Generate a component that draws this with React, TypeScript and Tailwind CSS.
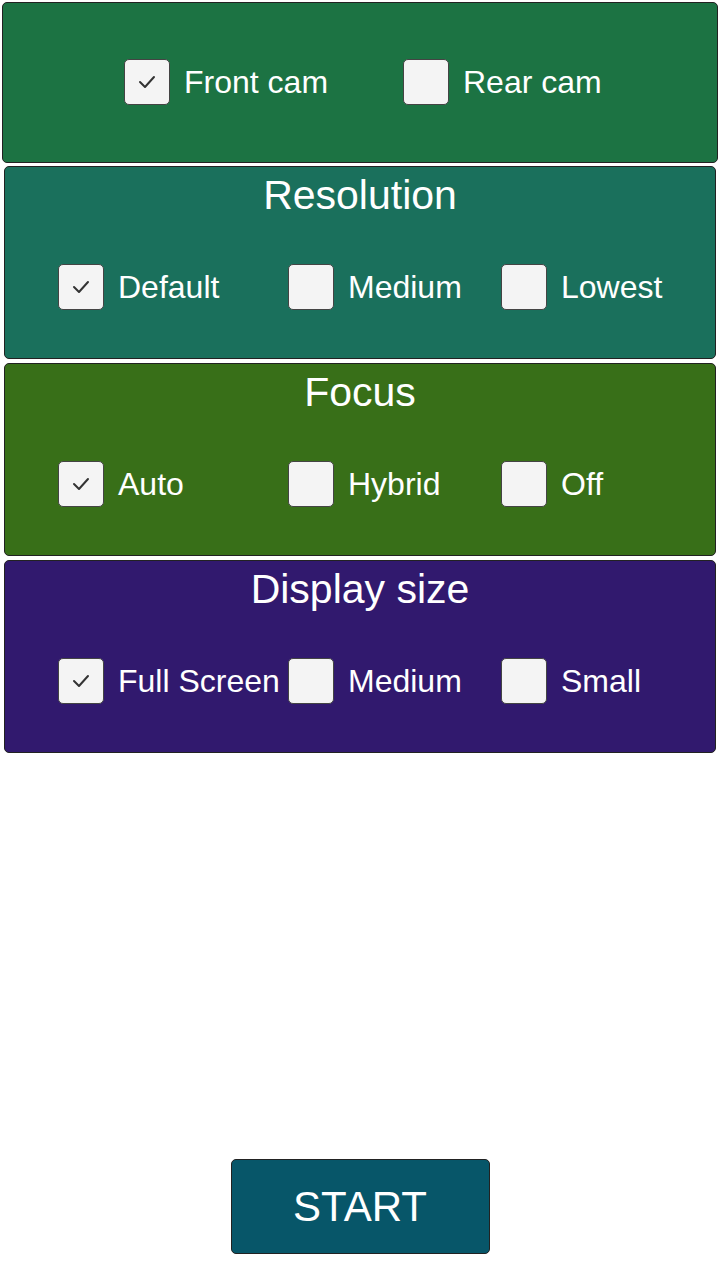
import React, { useState } from 'react';

function CheckBox({ checked }: { checked: boolean }) {
  return (
    <div className="w-[46px] h-[46px] rounded-[5px] bg-[#f4f4f4] border border-[#444] flex items-center justify-center flex-shrink-0">
      {checked && (
        <svg width="20" height="20" viewBox="0 0 20 20" fill="none">
          <polyline points="3,10 8,15 17,5" stroke="#333" strokeWidth="2" strokeLinecap="round" strokeLinejoin="round" />
        </svg>
      )}
    </div>
  );
}

function OptionItem({ label, checked, width, onClick }: { label: string; checked: boolean; width?: string; onClick: () => void }) {
  return (
    <button onClick={onClick} className={`flex items-center gap-[14px] text-left ${width ?? ''}`}>
      <CheckBox checked={checked} />
      <span className="text-[32px] text-white leading-none whitespace-nowrap">{label}</span>
    </button>
  );
}

function OptionGroup({ title, options, bg }: { title: string; options: string[]; bg: string }) {
  const [selected, setSelected] = useState(0);
  const widths = ['w-[230px]', 'w-[213px]', ''];
  return (
    <div className={`mx-1 h-[193px] rounded-[5px] border border-[#222] ${bg} flex flex-col`}>
      <h2 className="text-center text-white text-[41px] leading-none pt-[8px]">{title}</h2>
      <div className="flex items-center pl-[53px] mt-[48px]">
        {options.map((opt, i) => (
          <OptionItem key={opt} label={opt} checked={selected === i} width={widths[i]} onClick={() => setSelected(i)} />
        ))}
      </div>
    </div>
  );
}

export default function App() {
  const [frontCam, setFrontCam] = useState(true);

  return (
    <div className="w-[720px] h-[1280px] bg-white flex flex-col pt-[2px]" style={{ fontFamily: '"Liberation Sans", Arial, sans-serif' }}>
      {/* Camera */}
      <div className="mx-[2px] h-[161px] rounded-[5px] border border-[#222] bg-[#1c7343] flex items-center pl-[121px] pb-[1px]">
        <OptionItem label="Front cam" checked={frontCam} width="w-[279px]" onClick={() => setFrontCam(true)} />
        <OptionItem label="Rear cam" checked={!frontCam} onClick={() => setFrontCam(false)} />
      </div>

      <div className="flex flex-col gap-[4px] mt-[3px]">
        <OptionGroup title="Resolution" options={['Default', 'Medium', 'Lowest']} bg="bg-[#1a705c]" />
        <OptionGroup title="Focus" options={['Auto', 'Hybrid', 'Off']} bg="bg-[#386f18]" />
        <OptionGroup title="Display size" options={['Full Screen', 'Medium', 'Small']} bg="bg-[#31196e]" />
      </div>

      <div className="flex-1" />

      <div className="flex justify-center pb-[26px]">
        <button className="w-[259px] h-[95px] rounded-[5px] border border-[#222] bg-[#075669] text-white text-[42px]">
          START
        </button>
      </div>
    </div>
  );
}
